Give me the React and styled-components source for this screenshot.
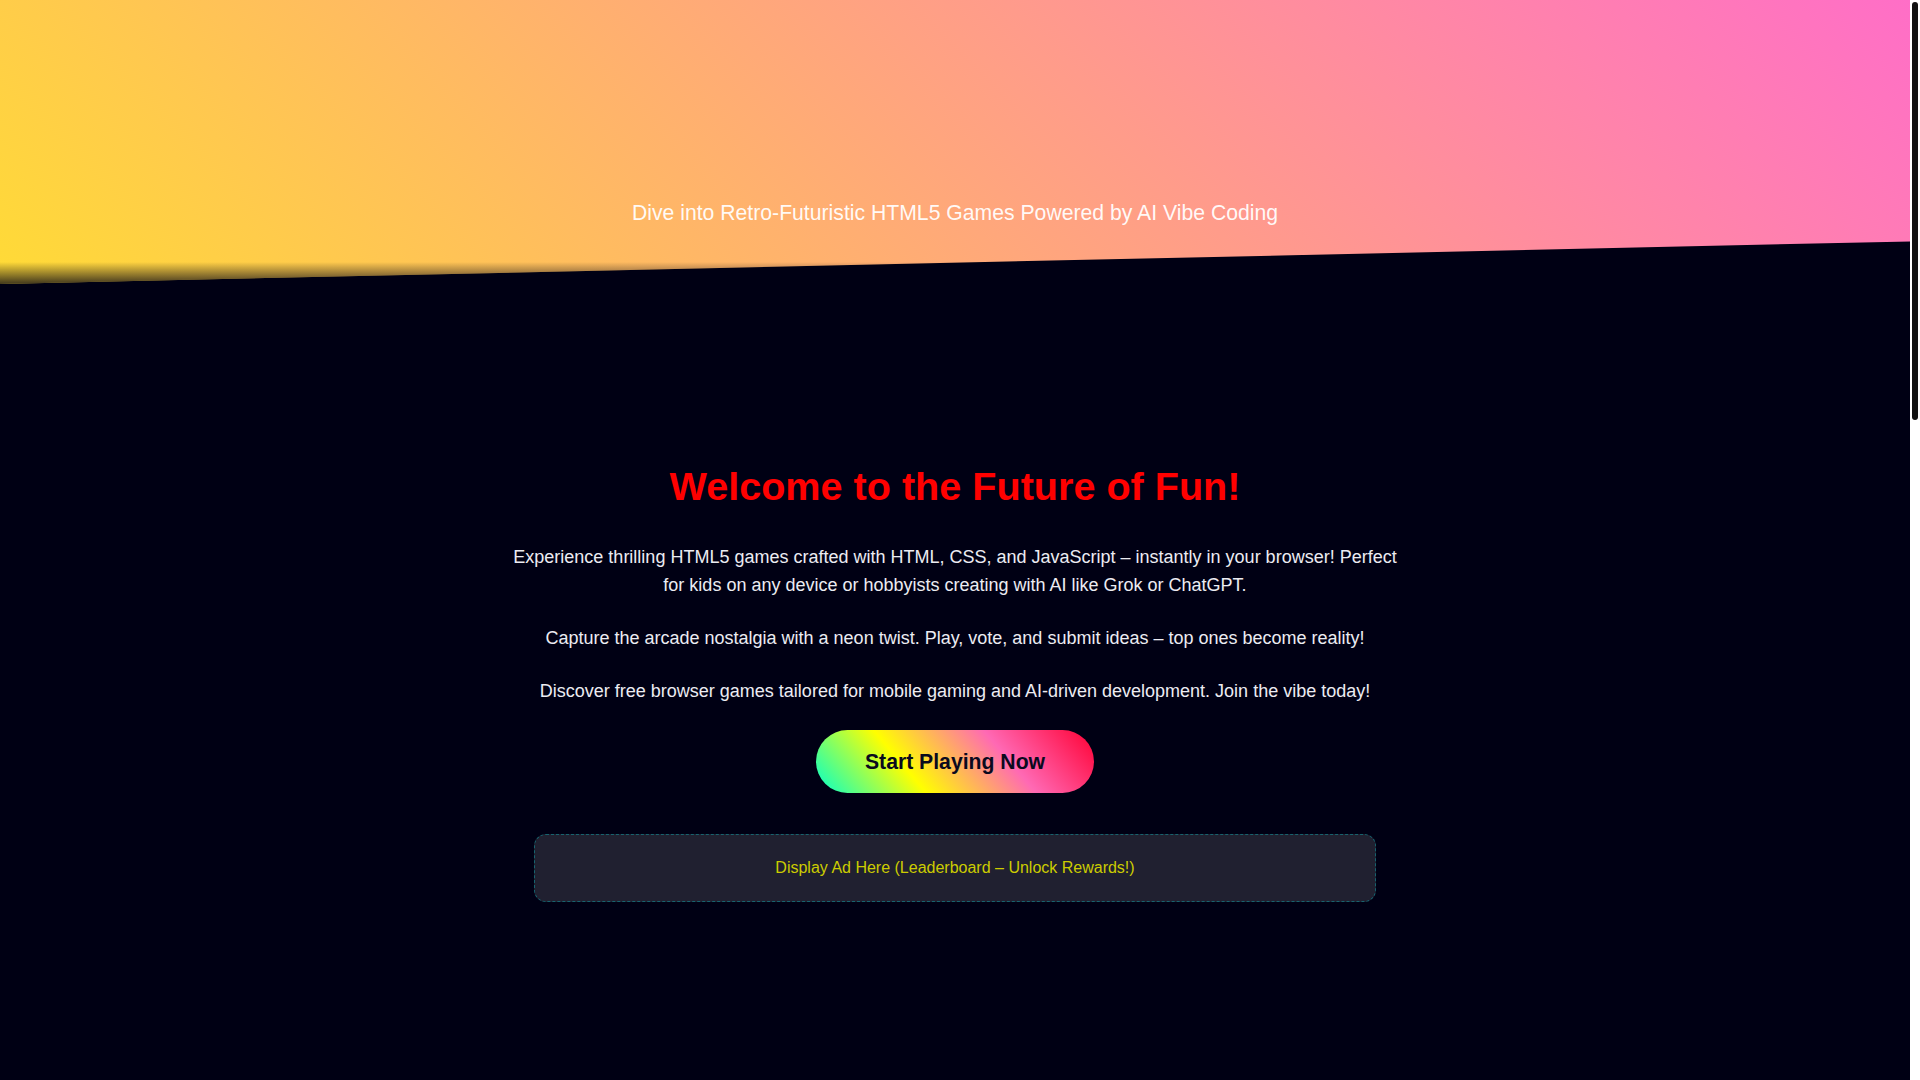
import React from 'react'
import styled, { createGlobalStyle } from 'styled-components'

const GlobalStyle = createGlobalStyle`
    html {
        background: #000014;
    }
    body {
        margin: 0 10px 0 0;
        min-height: 2780px;
        background: #000014;
        color: #e6e6ee;
        font-family: "Liberation Sans", Arial, sans-serif;
    }
`;

// the page scrolls: a light track with a dark thumb on the right edge
const ScrollTrack = styled.div`
    position: fixed;
    top: 0;
    right: 0;
    width: 10px;
    height: 100vh;
    background: #ffffff;
    z-index: 10;
`;

const ScrollThumb = styled.div`
    margin: 2px 0 0 2px;
    width: 6px;
    height: 418px;
    border-radius: 3px;
    background: #111111;
`;

const Header = styled.header`
    position: relative;
    height: 284px;
    box-sizing: border-box;
    padding: 200px 20px 0;
    text-align: center;
    background: linear-gradient(45deg, #ffdb36, #ff6ec7);
    clip-path: polygon(0 0, 100% 0, 100% 85%, 0 100%);

    &::after {
        content: '';
        position: absolute;
        left: 0;
        right: 0;
        bottom: 0;
        height: 22px;
        background: linear-gradient(rgba(0, 0, 20, 0), rgba(0, 0, 20, 0.75));
    }
`;

const Tagline = styled.p`
    margin: 0;
    font-size: 21.2px;
    line-height: 26px;
    color: rgba(255, 255, 255, 0.95);
`;

const Hero = styled.section`
    max-width: 900px;
    margin: 0 auto;
    padding: 179px 20px 0;
    text-align: center;
`;

const Title = styled.h2`
    margin: 0 0 34px;
    font-size: 39.6px;
    line-height: 46px;
    font-weight: 700;
    color: #ff0000;
`;

const Text = styled.p`
    margin: 0 0 25px;
    font-size: 18px;
    line-height: 28px;
    color: #ececf2;
`;

const PlayButton = styled.button`
    display: inline-block;
    padding: 20px 49px;
    border: none;
    border-radius: 40px;
    font-family: inherit;
    font-size: 21.2px;
    line-height: 23px;
    font-weight: 700;
    color: #0a0a1e;
    cursor: pointer;
    background: linear-gradient(50deg, #00ffcc, #ffff00, #ff69b4, #ff0033);
`;

const AdSlot = styled.div`
    box-sizing: border-box;
    width: 842px;
    margin: 41px auto 0;
    padding: 24px;
    border: 1px dashed rgba(0, 255, 255, 0.3);
    border-radius: 12px;
    background: #202030;
    font-size: 16px;
    line-height: 18px;
    color: #cccc00;
`;

const paragraphs = [
    'Experience thrilling HTML5 games crafted with HTML, CSS, and JavaScript – instantly in your browser! Perfect for kids on any device or hobbyists creating with AI like Grok or ChatGPT.',
    'Capture the arcade nostalgia with a neon twist. Play, vote, and submit ideas – top ones become reality!',
    'Discover free browser games tailored for mobile gaming and AI-driven development. Join the vibe today!',
]

const App = () => {
    return (
        <>
            <GlobalStyle />
            <Header>
                <Tagline>Dive into Retro-Futuristic HTML5 Games Powered by AI Vibe Coding</Tagline>
            </Header>
            <Hero>
                <Title>Welcome to the Future of Fun!</Title>
                {paragraphs.map((text) => (
                    <Text key={text}>{text}</Text>
                ))}
                <PlayButton>Start Playing Now</PlayButton>
                <AdSlot>Display Ad Here (Leaderboard – Unlock Rewards!)</AdSlot>
            </Hero>
            <ScrollTrack>
                <ScrollThumb />
            </ScrollTrack>
        </>
    )
}

export default App
